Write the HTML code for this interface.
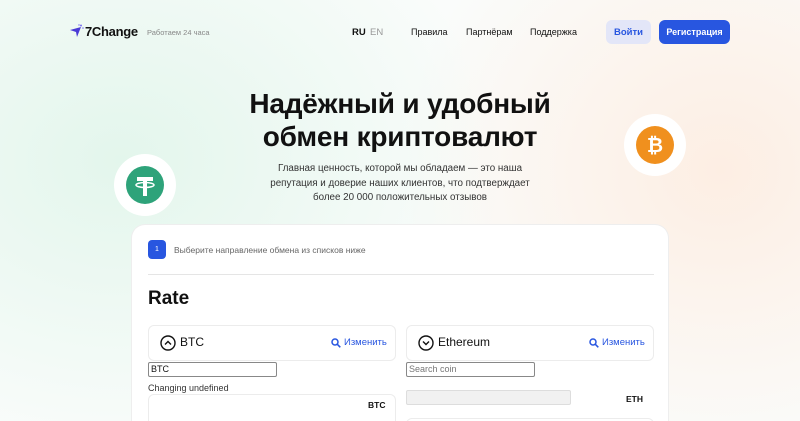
<!DOCTYPE html>
<html><head><meta charset="utf-8"><style>
*{box-sizing:border-box;margin:0;padding:0}
html,body{width:800px;height:421px;overflow:hidden}
body{font-family:"Liberation Sans",sans-serif;color:#111;position:relative;
background:radial-gradient(ellipse 380px 300px at 120px 160px,#e3f6ec 0%,rgba(255,255,255,0) 100%),radial-gradient(ellipse 320px 300px at 720px 170px,#fdeee3 0%,rgba(255,255,255,0) 100%),#fafcfb}
.a{position:absolute;white-space:nowrap}
.nav{font-size:9.5px;color:#111}
.btn{position:absolute;border-radius:6px;font-size:9.5px;font-weight:bold;display:flex;align-items:center;justify-content:center}
h1{position:absolute;left:0;width:800px;top:87px;text-align:center;font-size:28px;line-height:33px;font-weight:bold;letter-spacing:-0.2px}
.sub{position:absolute;left:0;width:800px;top:162px;text-align:center;font-size:9.8px;line-height:14.5px;color:#333}
.circ{position:absolute;border-radius:50%;background:#fff}
.card{position:absolute;left:131px;top:224px;width:538px;height:197px;overflow:hidden;background:#fff;border-radius:14px 14px 0 0;border:1px solid #eee;border-bottom:none}
.box{position:absolute;background:#fff;border:1px solid #ececec;border-radius:6px}
.inp{position:absolute;height:15px;border:1px solid #888;border-radius:2px;font-size:9px;padding-left:2px;line-height:13px;background:#fff}
.chg{font-size:9.5px;color:#2856e0;position:absolute}
</style></head><body>
<svg class="a" style="left:69px;top:24px" width="15" height="14" viewBox="0 0 15 14"><path d="M1 6 L12 3 L8 13 L7 8 Z" fill="#4a3bd6"/><circle cx="12" cy="1.5" r="1" fill="#7a6ff0"/><circle cx="14" cy="4" r=".8" fill="#7a6ff0"/><circle cx="10" cy="1" r=".7" fill="#7a6ff0"/></svg>
<div class="a" style="left:85px;top:24px;font-size:13px;font-weight:bold;letter-spacing:-0.3px">7Change</div>
<div class="a" style="left:147px;top:28px;font-size:7.5px;color:#888">Работаем 24 часа</div>
<div class="a nav" style="left:352px;top:27px;font-weight:bold">RU</div>
<div class="a nav" style="left:370px;top:27px;color:#999">EN</div>
<div class="a nav" style="left:411px;top:27px;font-size:9px">Правила</div>
<div class="a nav" style="left:466px;top:27px;font-size:9px">Партнёрам</div>
<div class="a nav" style="left:530px;top:27px;font-size:9px">Поддержка</div>
<div class="btn" style="left:606px;top:20px;width:45px;height:24px;background:#e3e6f8;color:#2856e0">Войти</div>
<div class="btn" style="left:659px;top:20px;width:71px;height:24px;background:#2856e0;color:#fff;font-size:9px">Регистрация</div>
<h1>Надёжный и удобный<br>обмен криптовалют</h1>
<div class="sub">Главная ценность, которой мы обладаем — это наша<br>репутация и доверие наших клиентов, что подтверждает<br>более 20 000 положительных отзывов</div>
<div class="circ" style="left:114px;top:154px;width:62px;height:62px"></div>
<svg class="a" style="left:126px;top:166px" width="38" height="38" viewBox="0 0 38 38"><circle cx="19" cy="19" r="19" fill="#2ea37a"/><path d="M11 11h16v4h-6v15h-4V15h-6z" fill="#fff"/><ellipse cx="19" cy="19" rx="9" ry="2.5" fill="none" stroke="#fff" stroke-width="1.5"/></svg>
<div class="circ" style="left:624px;top:114px;width:62px;height:62px"></div>
<svg class="a" style="left:636px;top:126px" width="38" height="38" viewBox="0 0 38 38"><circle cx="19" cy="19" r="19" fill="#f0901e"/><text x="19" y="26" text-anchor="middle" font-size="20" font-weight="bold" fill="#fff" font-family="Liberation Sans">₿</text></svg>
<div class="card">
<div class="a" style="left:16px;top:15px;width:18px;height:19px;background:#2856e0;border-radius:4px;color:#fff;font-size:7px;display:flex;align-items:center;justify-content:center">1</div>
<div class="a" style="left:42px;top:20px;font-size:8.5px;color:#666">Выберите направление обмена из списков ниже</div>
<div class="a" style="left:16px;top:49px;width:506px;height:1px;background:#e5e5e5"></div>
<div class="a" style="left:16px;top:63px;font-size:19px;font-weight:bold">Rate</div>
<div class="box" style="left:16px;top:100px;width:248px;height:36px"></div>
<svg class="a" style="left:28px;top:110px" width="16" height="16" viewBox="0 0 16 16"><circle cx="8" cy="8" r="7" fill="none" stroke="#111" stroke-width="1.4"/><path d="M5 9.5l3-3 3 3" fill="none" stroke="#111" stroke-width="1.4"/></svg>
<div class="a" style="left:48px;top:110px;font-size:12px">BTC</div>
<svg class="a" style="left:199px;top:113px" width="10" height="10" viewBox="0 0 10 10"><circle cx="4" cy="4" r="3" fill="none" stroke="#2856e0" stroke-width="1.5"/><path d="M6.3 6.3l3 3" stroke="#2856e0" stroke-width="1.5"/></svg>
<div class="chg" style="left:212px;top:112px">Изменить</div>
<div class="box" style="left:274px;top:100px;width:248px;height:36px"></div>
<svg class="a" style="left:286px;top:110px" width="16" height="16" viewBox="0 0 16 16"><circle cx="8" cy="8" r="7" fill="none" stroke="#111" stroke-width="1.4"/><path d="M5 6.5l3 3 3-3" fill="none" stroke="#111" stroke-width="1.4"/></svg>
<div class="a" style="left:306px;top:110px;font-size:12px">Ethereum</div>
<svg class="a" style="left:457px;top:113px" width="10" height="10" viewBox="0 0 10 10"><circle cx="4" cy="4" r="3" fill="none" stroke="#2856e0" stroke-width="1.5"/><path d="M6.3 6.3l3 3" stroke="#2856e0" stroke-width="1.5"/></svg>
<div class="chg" style="left:470px;top:112px">Изменить</div>
<div class="inp" style="left:16px;top:137px;width:129px">BTC</div>
<div class="inp" style="left:274px;top:137px;width:129px;color:#777">Search coin</div>
<div class="a" style="left:16px;top:158px;font-size:9px;color:#333">Changing undefined</div>
<div class="box" style="left:16px;top:169px;width:248px;height:40px"></div>
<div class="a" style="left:236px;top:175px;font-size:8.5px;font-weight:bold">BTC</div>
<div class="a" style="left:274px;top:165px;width:165px;height:15px;background:#f1f1f1;border:1px solid #ddd;border-radius:2px"></div>
<div class="a" style="left:494px;top:169px;font-size:8.5px;font-weight:bold">ETH</div>
<div class="box" style="left:274px;top:193px;width:248px;height:20px"></div>
</div>
</body></html>
